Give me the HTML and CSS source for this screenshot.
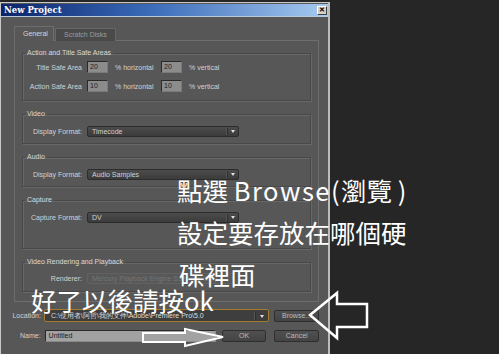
FILE: index.html
```html
<!DOCTYPE html>
<html lang="zh-Hant">
<head>
    <meta charset="UTF-8">
    <title>New Project</title>
    <link rel="stylesheet" href="styles.css">
</head>
<body>
<div class="window">
    <div class="titlebar">
        <span class="caption">New Project</span>
        <span class="close">&#x2715;</span>
    </div>
    <div class="content">
        <div class="tabs">
            <div class="tab active">General</div>
            <div class="tab">Scratch Disks</div>
        </div>
        <div class="panel">
            <fieldset class="group safe">
                <legend>Action and Title Safe Areas</legend>
                <div class="row">
                    <span class="label">Title Safe Area</span>
                    <span class="num">20</span>
                    <span class="unit">% horizontal</span>
                    <span class="num">20</span>
                    <span class="unit">% vertical</span>
                </div>
                <div class="row">
                    <span class="label">Action Safe Area</span>
                    <span class="num">10</span>
                    <span class="unit">% horizontal</span>
                    <span class="num">10</span>
                    <span class="unit">% vertical</span>
                </div>
            </fieldset>
            <fieldset class="group">
                <legend>Video</legend>
                <div class="row">
                    <span class="label">Display Format:</span>
                    <span class="select">Timecode</span>
                </div>
            </fieldset>
            <fieldset class="group">
                <legend>Audio</legend>
                <div class="row">
                    <span class="label">Display Format:</span>
                    <span class="select">Audio Samples</span>
                </div>
            </fieldset>
            <fieldset class="group capture">
                <legend>Capture</legend>
                <div class="row">
                    <span class="label">Capture Format:</span>
                    <span class="select">DV</span>
                </div>
            </fieldset>
            <fieldset class="group render">
                <legend>Video Rendering and Playback</legend>
                <div class="row">
                    <span class="label">Renderer:</span>
                    <span class="select disabled">Mercury Playback Engine Software Only</span>
                </div>
            </fieldset>
        </div>
    </div>
    <div class="footer">
        <div class="frow">
            <span class="flabel">Location:</span>
            <span class="select location">C:\使用者\阿哲\我的文件\Adobe\Premiere Pro\5.0</span>
            <span class="btn browse">Browse...</span>
        </div>
        <div class="frow">
            <span class="flabel">Name:</span>
            <span class="name">Untitled</span>
            <span class="btn ok">OK</span>
            <span class="btn">Cancel</span>
        </div>
    </div>
</div>

<!-- 說明文字與箭頭 -->
<div class="note n1">點選 <span class="latin">Browse(</span>瀏覽 )</div>
<div class="note n2">設定要存放在哪個硬</div>
<div class="note n3">碟裡面</div>
<div class="note n4">好了以後請按ok</div>
<svg class="arrows" width="499" height="354" viewBox="0 0 499 354">
    <polygon points="310,315 337,293 337,304 367,304 367,327 337,327 337,338"
             fill="none" stroke="#fff" stroke-width="2.5" stroke-linejoin="miter"/>
    <polygon points="143,333 185,333 185,329 223,337 185,346 185,342 143,342"
             fill="none" stroke="#fff" stroke-width="2"/>
</svg>
</body>
</html>
```

FILE: styles.css
```css
* {
    box-sizing: border-box;
}
body {
    margin: 0;
    width: 499px;
    height: 354px;
    overflow: hidden;
    background-color: #262626;
    font-family: "Liberation Sans", Arial, sans-serif;
    font-size: 7px;
    color: #d2d2d2;
}
.window {
    width: 330px;
    height: 360px;
    margin-top: 2px;
    background-color: #575757;
    border: 1px solid #c9c9c9;
    border-right: 2px solid #bdbdbd;
}
.titlebar {
    display: flex;
    align-items: center;
    justify-content: space-between;
    height: 13px;
    margin: 1px 0 0 0;
    padding: 0 0 0 3px;
    background: linear-gradient(to right, #0a246a, #3a6ab8 45%, #a6caf0);
    border-bottom: 1px solid #b9c9dc;
}
.caption {
    font-family: "DejaVu Serif", "Liberation Serif", serif;
    font-weight: bold;
    font-size: 8.5px;
    color: #fff;
}
.close {
    display: flex;
    align-items: center;
    justify-content: center;
    width: 10px;
    height: 9px;
    margin-right: 1px;
    background-color: #d4d0c8;
    border: 1px solid;
    border-color: #fff #404040 #404040 #fff;
    font-size: 7px;
    font-weight: bold;
    color: #000;
}
.content {
    padding: 9px 9px 0 13px;
}
.tabs {
    display: flex;
    align-items: flex-end;
    gap: 1px;
    margin-bottom: -1px;
    position: relative;
    z-index: 1;
}
.tab {
    height: 13px;
    padding: 0 8px;
    line-height: 12px;
    background-color: #4a4a4a;
    color: #9c9c9c;
    border: 1px solid #666;
    border-bottom: none;
}
.tab.active {
    height: 15px;
    width: 40px;
    text-align: center;
    line-height: 14px;
    background-color: #575757;
    color: #d6d6d6;
    border-color: #6e6e6e;
}
.panel {
    border: 1px solid #6e6e6e;
    padding: 7px 7px 9px 7px;
}
.group {
    margin: 8px 0 0 0;
    padding: 6px 0 6px 0;
    min-width: 0;
    border: 1px solid #484848;
    box-shadow: 1px 1px 0 #686868, inset 1px 1px 0 #686868;
}
.group:first-child {
    margin-top: 0;
}
.group legend {
    height: 10px;
    line-height: 10px;
    margin-left: 2px;
    padding: 0 2px;
    color: #d8d8d8;
}
.safe {
    padding-top: 3px;
    padding-bottom: 8px;
}
.capture {
    padding-bottom: 25px;
}
.render {
    padding-top: 5px;
    padding-bottom: 7px;
}
.row {
    display: flex;
    align-items: center;
    height: 12px;
}
.row + .row {
    margin-top: 7px;
}
.label {
    width: 59px;
    margin-right: 5px;
    text-align: right;
    white-space: nowrap;
}
.num {
    width: 21px;
    height: 12px;
    padding-left: 2px;
    line-height: 10px;
    background-color: #8c8c8c;
    color: #1e1e1e;
    border: 1px solid;
    border-color: #2a2a2a #7a7a7a #7a7a7a #2a2a2a;
}
.unit {
    margin: 0 7px 0 7px;
    width: 39px;
}
.select {
    position: relative;
    width: 152px;
    height: 11px;
    padding-left: 4px;
    line-height: 9px;
    white-space: nowrap;
    overflow: hidden;
    background: linear-gradient(#4c4c4c, #3b3b3b);
    border: 1px solid #2c2c2c;
    border-radius: 2px;
    color: #d0d0d0;
}
.select::after {
    content: "";
    position: absolute;
    right: 0;
    top: 1px;
    width: 10px;
    height: 7px;
    border-left: 1px solid #2e2e2e;
    box-shadow: -1px 0 0 #555;
}
.select::before {
    content: "";
    position: absolute;
    right: 3px;
    top: 3px;
    border-left: 2px solid transparent;
    border-right: 2px solid transparent;
    border-top: 3px solid #e0e0e0;
}
.select.disabled {
    background: #585858;
    border-color: #626262;
    color: #757575;
}
.select.disabled::before {
    border-top-color: #6a6a6a;
}
.select.disabled::after {
    border-left-color: #626262;
    box-shadow: none;
}
.footer {
    padding: 7px 9px 0 1px;
}
.frow {
    display: flex;
    align-items: center;
    height: 13px;
}
.frow + .frow {
    margin-top: 7px;
}
.flabel {
    width: 39px;
    margin-right: 3px;
    text-align: right;
    white-space: nowrap;
}
.location {
    width: 226px;
    height: 13px;
    line-height: 11px;
    padding-left: 6px;
    background: #3e3e3e;
    border: 1px solid #a27c2a;
    color: #dcdcdc;
}
.location::before {
    top: 5px;
    right: 4px;
}
.location::after {
    top: 2px;
    height: 8px;
    width: 12px;
}
.name {
    width: 173px;
    height: 12px;
    margin-left: 1px;
    padding-left: 3px;
    line-height: 10px;
    background-color: #a2a2a2;
    color: #1a1a1a;
    border: 1px solid;
    border-color: #2a2a2a #8a8a8a #8a8a8a #2a2a2a;
}
.btn {
    width: 45px;
    height: 12px;
    margin-left: 8px;
    text-align: center;
    line-height: 10px;
    background: linear-gradient(#505050, #444);
    border: 1px solid #2e2e2e;
    border-radius: 2px;
    color: #bcbcbc;
}
.browse {
    margin-left: 5px;
}
.ok {
    margin-left: 6px;
}
.note {
    position: absolute;
    font-family: "Noto Sans CJK TC", "Noto Sans", sans-serif;
    font-size: 25.5px;
    line-height: 26px;
    color: #fff;
    white-space: nowrap;
}
.latin {
    letter-spacing: 1.5px;
}
.n1 {
    left: 177px;
    top: 177px;
}
.n2 {
    left: 177px;
    top: 219px;
}
.n3 {
    left: 179px;
    top: 261px;
}
.n4 {
    left: 31px;
    top: 287px;
}
.arrows {
    position: absolute;
    left: 0;
    top: 0;
}
```
